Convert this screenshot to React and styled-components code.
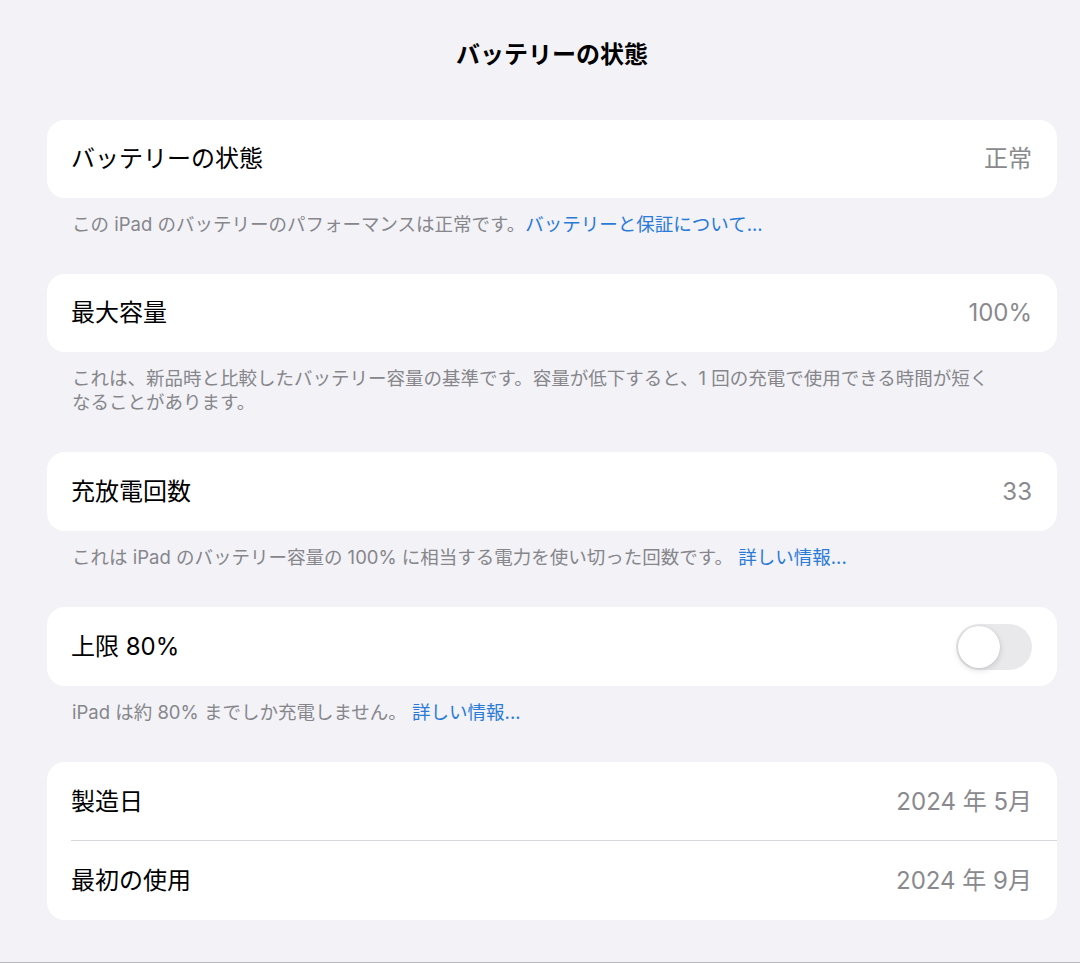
import React from "react";
import styled, { createGlobalStyle } from "styled-components";

const GlobalStyle = createGlobalStyle`
  * { box-sizing: border-box; }
  body {
    margin: 0;
    background: #f2f2f7;
    font-family: "Inter", "Noto Sans CJK JP", sans-serif;
    -webkit-font-smoothing: antialiased;
  }
`;

const Page = styled.div`
  height: 963px;
  padding: 40px 23px 0 47px;
  border-bottom: 1px solid #b8b8bc;
  overflow: hidden;
`;

const Title = styled.h1`
  margin: 0 0 50px;
  height: 30px;
  line-height: 30px;
  text-align: center;
  font-size: 24px;
  font-weight: 700;
  color: #000;
`;

const Card = styled.div`
  background: #fff;
  border-radius: 18px;
  overflow: hidden;
`;

const Row = styled.div`
  height: ${(p) => (p.$short ? 78 : 79)}px;
  display: flex;
  align-items: center;
  justify-content: space-between;
  padding: 0 25px 0 24px;
  position: relative;
  ${(p) =>
    p.$divider &&
    `
    &::after {
      content: "";
      position: absolute;
      left: 24px;
      right: 0;
      bottom: 0;
      height: 1px;
      background: #d8d8dc;
    }
  `}
`;

const Label = styled.span`
  font-size: 24px;
  color: #000;
  line-height: 30px;
`;

const Value = styled.span`
  font-size: 24px;
  color: #8a8a8e;
  line-height: 30px;
`;

const Footer = styled.p`
  margin: 0;
  padding: 14px 24px 38px 25px;
  font-size: 18.5px;
  line-height: 24px;
  color: #86868b;
`;

const Link = styled.span`
  color: #2a7bd8;
`;

const Track = styled.div`
  width: 76px;
  height: 46px;
  border-radius: 23px;
  background: #e9e9eb;
  padding: 2px;
  display: flex;
  align-items: center;
`;

const Knob = styled.div`
  width: 42px;
  height: 42px;
  border-radius: 50%;
  background: #fff;
  box-shadow: 0 2px 6px rgba(0, 0, 0, 0.15), 0 0 0 0.5px rgba(0, 0, 0, 0.06);
`;

export default function App() {
  return (
    <>
      <GlobalStyle />
      <Page>
        <Title>バッテリーの状態</Title>

        <Card>
          <Row $short>
            <Label>バッテリーの状態</Label>
            <Value>正常</Value>
          </Row>
        </Card>
        <Footer>
          この iPad のバッテリーのパフォーマンスは正常です。
          <Link>バッテリーと保証について...</Link>
        </Footer>

        <Card>
          <Row $short>
            <Label>最大容量</Label>
            <Value>100%</Value>
          </Row>
        </Card>
        <Footer>
          これは、新品時と比較したバッテリー容量の基準です。容量が低下すると、1 回の充電で使用できる時間が短く
          <br />
          なることがあります。
        </Footer>

        <Card>
          <Row>
            <Label>充放電回数</Label>
            <Value>33</Value>
          </Row>
        </Card>
        <Footer>
          これは iPad のバッテリー容量の 100% に相当する電力を使い切った回数です。{" "}
          <Link>詳しい情報...</Link>
        </Footer>

        <Card>
          <Row>
            <Label>上限 80%</Label>
            <Track>
              <Knob />
            </Track>
          </Row>
        </Card>
        <Footer>
          iPad は約 80% までしか充電しません。 <Link>詳しい情報...</Link>
        </Footer>

        <Card>
          <Row $divider>
            <Label>製造日</Label>
            <Value>2024 年 5月</Value>
          </Row>
          <Row>
            <Label>最初の使用</Label>
            <Value>2024 年 9月</Value>
          </Row>
        </Card>
      </Page>
    </>
  );
}
